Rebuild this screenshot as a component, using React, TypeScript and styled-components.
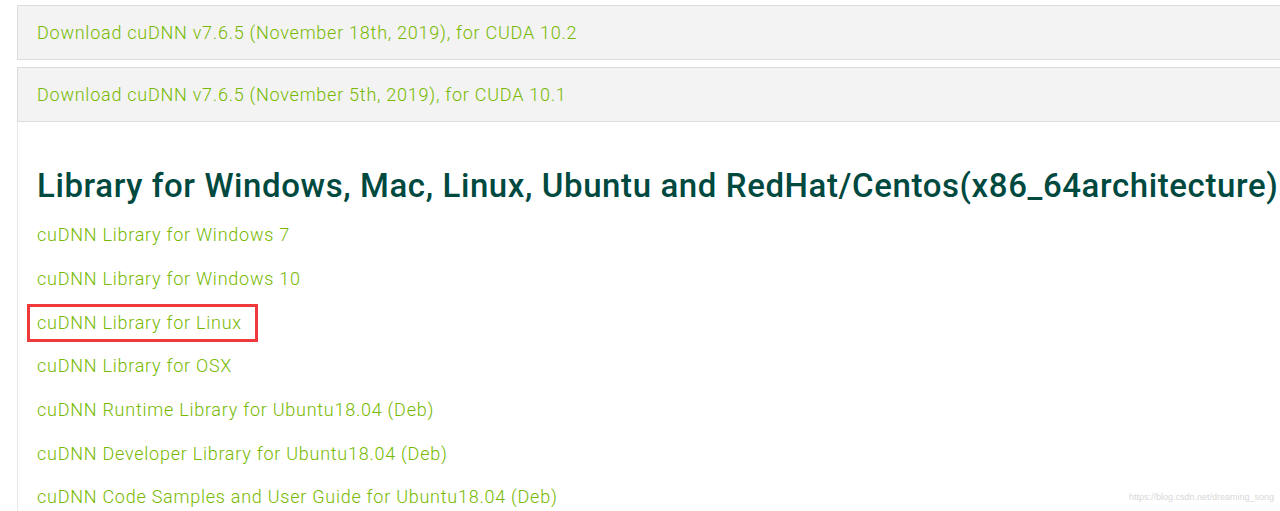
import React from "react";
import styled, { createGlobalStyle, css } from "styled-components";

const Global = createGlobalStyle`
  html, body { margin: 0; padding: 0; background: #ffffff; }
  body { overflow: hidden; width: 1280px; height: 511px; }
  #root { width: 1280px; height: 511px; overflow: hidden; position: relative; }
`;

const Page = styled.div`
  width: 1320px;
  padding: 5px 0 0 17px;
  font-family: Roboto, "Liberation Sans", Arial, sans-serif;
  display: flex;
  flex-direction: column;
  gap: 7px;
`;

const Panel = styled.div`
  background: #f3f3f3;
  border: 1px solid #dcdcdc;
  height: 53px;
  display: flex;
  align-items: center;
  padding-left: 19px;
  box-sizing: content-box;
`;

const Link = styled.a<{ $highlight?: boolean }>`
  color: #76b900;
  font-size: 18px;
  font-weight: 300;
  letter-spacing: 0.75px;
  line-height: 21px;
  text-decoration: none;
  position: relative;
  white-space: nowrap;
  ${(p) =>
    p.$highlight &&
    css`
      &::after {
        content: "";
        position: absolute;
        left: -10px;
        right: -16px;
        top: -8px;
        bottom: -9px;
        border: 3px solid #f0393c;
      }
    `}
`;

const Section = styled.section`
  margin-top: -7px;
  border-left: 1px solid #e8e8e8;
  padding: 40px 0 0 19px;
  height: 400px;
  display: flex;
  flex-direction: column;
`;

const Heading = styled.h2`
  margin: 0 0 3px 0;
  color: #00493f;
  font-size: 33px;
  font-weight: 500;
  letter-spacing: 0.6px;
  line-height: 48px;
  white-space: nowrap;
`;

const Row = styled.div`
  height: 43.67px;
  display: flex;
  align-items: center;
`;

const Watermark = styled.div`
  position: absolute;
  right: 6px;
  bottom: 9px;
  font-family: "Liberation Sans", Arial, sans-serif;
  font-size: 9px;
  color: #d8d8d8;
`;

const links = [
  "cuDNN Library for Windows 7",
  "cuDNN Library for Windows 10",
  "cuDNN Library for Linux",
  "cuDNN Library for OSX",
  "cuDNN Runtime Library for Ubuntu18.04 (Deb)",
  "cuDNN Developer Library for Ubuntu18.04 (Deb)",
  "cuDNN Code Samples and User Guide for Ubuntu18.04 (Deb)",
];

export default function App() {
  return (
    <>
      <Global />
      <Page>
        <Panel>
          <Link href="#">Download cuDNN v7.6.5 (November 18th, 2019), for CUDA 10.2</Link>
        </Panel>
        <Panel>
          <Link href="#">Download cuDNN v7.6.5 (November 5th, 2019), for CUDA 10.1</Link>
        </Panel>
        <Section>
          <Heading>Library for Windows, Mac, Linux, Ubuntu and RedHat/Centos(x86_64architecture)</Heading>
          {links.map((l) => (
            <Row key={l}>
              <Link href="#" $highlight={l === "cuDNN Library for Linux"}>
                {l}
              </Link>
            </Row>
          ))}
        </Section>
      </Page>
      <Watermark>https://blog.csdn.net/dreaming_song</Watermark>
    </>
  );
}
